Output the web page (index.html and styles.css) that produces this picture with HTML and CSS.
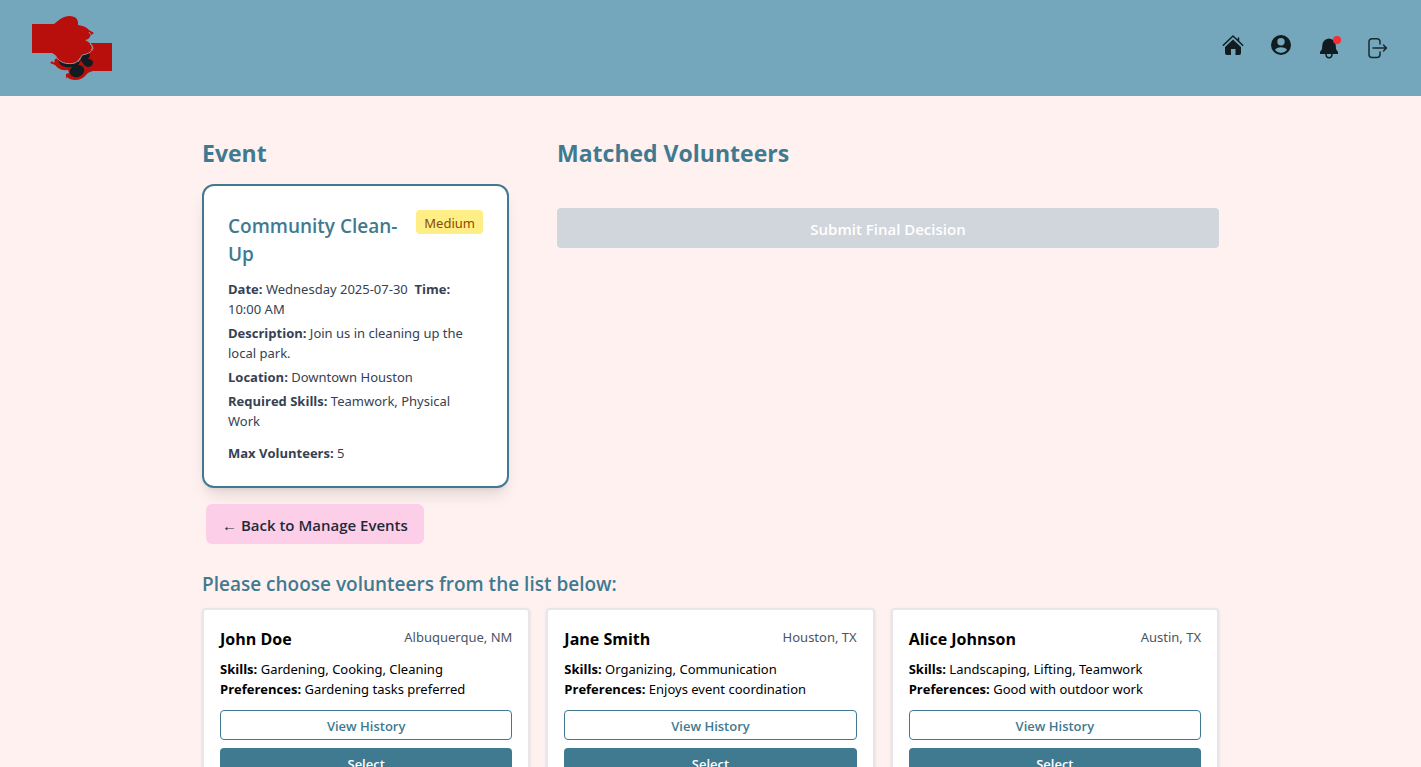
FILE: index.html
```html
<!DOCTYPE html>
<html lang="en">
<head>
<meta charset="utf-8">
<meta name="viewport" content="width=device-width, initial-scale=1">
<title>Volunteer Matching</title>
<link rel="stylesheet" href="styles.css">
</head>
<body>
<header class="navbar">
  <a class="logo" href="#" aria-label="Home page">
    <svg width="80" height="64" viewBox="0 0 80 64">
      <path fill="#b90f0c" d="M55 27H80V55H61Q56 56 54 59Q50 64 43 64Q38 64 35 61L34 63L34 58L37 57L36 54Q30 55 26 52L23 49L18 47L20 45L22 47L23 43L45 36Z"/>
      <path fill="#101c20" d="M26 43Q27 50 34 51Q42 52 47 48L49 43L38 47ZM47 40L57 37Q59 40 56 43Q61 43 61 47Q60 51 56 51Q52 50 51 47Q49 45 47 44Z"/>
      <ellipse cx="45" cy="55" rx="7.5" ry="6" transform="rotate(-20 45 55)" fill="#101c20"/>
      <path fill="#b90f0c" stroke="#9b9294" stroke-width="1" d="M54 24Q61 28 61 33Q58 38 50 39Q49 44 43 47Q34 49 28 45Q25 43 23 39L35 20Z"/>
      <path fill="#b90f0c" d="M0 8H22L27 4Q32 0 38 0Q44 1 45 3L46 6L46 9Q54 10 57 14L62 17L58 20Q58 23 53 24L58 31Q54 38 48 39Q46 46 37 46Q29 46 25 40L20 37H0Z"/>
      <path fill="none" stroke="#9b9294" stroke-width="1" d="M44 1L46 4M57 16L59 19M58 28Q62 31 59 34M48 42L46 46"/>
    </svg>
  </a>
  <nav class="nav-icons" aria-label="Main">
    <a class="nav-link" href="#" aria-label="Home">
      <svg width="24" height="24" viewBox="0 0 24 24"><path fill="#101c20" d="M12 6.500 20 14V20Q20 22 18 22H14.500V16H10V22H6Q4 22 4 20V14Z"/><path fill="none" stroke="#101c20" stroke-width="1.500" stroke-linecap="round" stroke-linejoin="round" d="M2.300 12.300 12 3l9.700 9.300M17.500 5v3"/></svg>
    </a>
    <a class="nav-link" href="#" aria-label="Profile">
      <svg width="24" height="24" viewBox="0 0 24 24"><path fill="#101c20" fill-rule="evenodd" d="M12 2a10 10 0 1 0 0 20a10 10 0 0 0 0-20M12 5a3.700 3.700 0 1 1 0 7.400A3.700 3.700 0 0 1 12 5M12 20Q8.200 19.700 6 17Q7.500 14.500 12 14.300Q16.500 14.500 18 17Q15.800 19.700 12 20"/></svg>
    </a>
    <a class="nav-link low" href="#" aria-label="Notifications">
      <svg width="24" height="24" viewBox="0 0 24 24"><path fill="#101c20" d="M12 2.500Q5.500 3 5.200 10L5 13L3 16V18H21V16L19 13L18.800 10Q18.500 3 12 2.500"/><path fill="none" stroke="#101c20" stroke-width="1.500" d="M9 18Q9 21.700 12 21.700T15 18"/></svg>
      <span class="dot"></span>
    </a>
    <button class="nav-link low" type="button" aria-label="Log out">
      <svg width="24" height="24" viewBox="0 0 24 24" fill="none" stroke="#182a30" stroke-width="1.500" stroke-linecap="round" stroke-linejoin="round"><path d="M15 8V5.500A3 3 0 0 0 12 2.700H7A3 3 0 0 0 4 5.500v13a3 3 0 0 0 3 3h5a3 3 0 0 0 3-3V16M8 12h13.500M18.500 9l3 3-3 3"/></svg>
    </button>
  </nav>
</header>

<main class="page">
  <div class="overview">
    <section>
      <h2 class="section-title">Event</h2>
      <article class="event-card">
        <div class="event-head">
          <h3 class="event-name">Community Clean-Up</h3>
          <span class="badge">Medium</span>
        </div>
        <div class="event-details">
          <p><strong>Date:</strong> Wednesday 2025-07-30 &nbsp;<strong>Time:</strong> 10:00 AM</p>
          <p><strong>Description:</strong> Join us in cleaning up the local park.</p>
          <p><strong>Location:</strong> Downtown Houston</p>
          <p><strong>Required Skills:</strong> Teamwork, Physical Work</p>
          <p class="event-max"><strong>Max Volunteers:</strong> 5</p>
        </div>
      </article>
      <button class="back" type="button">← Back to Manage Events</button>
    </section>
    <section class="matched">
      <h2 class="section-title">Matched Volunteers</h2>
      <button class="submit" type="button" disabled>Submit Final Decision</button>
    </section>
  </div>

  <h3 class="list-title">Please choose volunteers from the list below:</h3>
  <div class="volunteers">
    <article class="volunteer">
      <div class="volunteer-head"><h4 class="volunteer-name">John Doe</h4><span class="place">Albuquerque, NM</span></div>
      <p><strong>Skills:</strong> Gardening, Cooking, Cleaning</p>
      <p><strong>Preferences:</strong> Gardening tasks preferred</p>
      <div class="actions"><button class="btn outline" type="button">View History</button><button class="btn solid" type="button">Select</button></div>
    </article>
    <article class="volunteer">
      <div class="volunteer-head"><h4 class="volunteer-name">Jane Smith</h4><span class="place">Houston, TX</span></div>
      <p><strong>Skills:</strong> Organizing, Communication</p>
      <p><strong>Preferences:</strong> Enjoys event coordination</p>
      <div class="actions"><button class="btn outline" type="button">View History</button><button class="btn solid" type="button">Select</button></div>
    </article>
    <article class="volunteer">
      <div class="volunteer-head"><h4 class="volunteer-name">Alice Johnson</h4><span class="place">Austin, TX</span></div>
      <p><strong>Skills:</strong> Landscaping, Lifting, Teamwork</p>
      <p><strong>Preferences:</strong> Good with outdoor work</p>
      <div class="actions"><button class="btn outline" type="button">View History</button><button class="btn solid" type="button">Select</button></div>
    </article>
  </div>
</main>
</body>
</html>
```
FILE: styles.css
```css
* { box-sizing: border-box; margin: 0; padding: 0; }
body {
  background: #fff1f0;
  color: #000;
  font-family: "Noto Sans", "Open Sans", sans-serif;
  font-size: 13px;
  line-height: 20px;
}
h2, h3, h4, button, strong { font-family: "Open Sans", "Noto Sans", sans-serif; }
button { font-size: 13px; font-weight: 600; cursor: pointer; border: 0; }
svg { display: block; }
strong { font-weight: 700; }

.navbar {
  display: flex;
  align-items: center;
  justify-content: space-between;
  padding: 16px 32px;
  background: #74a7bc;
}
.logo { display: block; }
.nav-icons { display: flex; align-items: flex-start; gap: 24px; }
.nav-link { position: relative; display: block; background: none; padding-bottom: 6px; }
.nav-link.low { padding: 3px 0; }
.dot {
  position: absolute;
  top: 3px;
  right: 0;
  width: 8px;
  height: 8px;
  border-radius: 50%;
  background: #fb2c36;
}

.page { max-width: 1081px; margin: 0 auto; padding: 40px 32px; }
.overview {
  display: grid;
  grid-template-columns: repeat(3, 1fr);
  gap: 48px;
}
.matched { grid-column: span 2; }
.section-title {
  padding-top: 2px;
  margin-bottom: 16px;
  color: #3f7a90;
  font-size: 23px;
  font-weight: 700;
  line-height: 30px;
}
.event-card {
  padding: 24px;
  background: #fff;
  border: 2px solid #3f7a90;
  border-radius: 12px;
  box-shadow: 0 10px 15px -3px rgba(0, 0, 0, .1), 0 4px 6px -4px rgba(0, 0, 0, .1);
}
.event-head { display: flex; justify-content: space-between; align-items: flex-start; margin-bottom: 10px; }
.event-name { padding-top: 2px; color: #3f7a90; font-size: 19px; font-weight: 600; line-height: 28px; }
.badge {
  padding: 3px 8px 1px;
  border-radius: 4px;
  background: #ffee85;
  color: #894b00;
}
.event-details { display: grid; gap: 4px; padding-top: 1px; margin-bottom: -1px; color: #364153; }
.event-max { margin-top: 8px; }
.back, .submit {
  padding: 9px 16px 7px;
  font-size: 15px;
  line-height: 24px;
}
.back {
  margin: 16px 4px 0;
  border-radius: 6px;
  background: #fccee8;
  color: #1e2939;
}
.submit {
  width: 100%;
  margin-top: 24px;
  border-radius: 4px;
  background: #d1d5dc;
  color: #fff;
}

.list-title {
  margin: 26px 0 10px;
  color: #3f7a90;
  font-size: 19px;
  font-weight: 600;
  line-height: 28px;
}
.volunteers { display: grid; grid-template-columns: repeat(3, 1fr); gap: 16px; }
.volunteer {
  padding: 17px 16px 16px;
  background: #fff;
  border: 2px solid #e5e7eb;
  border-radius: 4px;
  box-shadow: 0 1px 3px rgba(0, 0, 0, .1), 0 1px 2px -1px rgba(0, 0, 0, .1);
}
.volunteer-head { display: flex; justify-content: space-between; margin-bottom: 8px; }
.volunteer-name { font-size: 16px; font-weight: 700; line-height: 24px; }
.place { color: #4a5565; }
.actions { display: grid; gap: 8px; margin-top: 11px; }
.btn { min-height: 30px; padding: 1px 12px 0; border-radius: 4px; }
.outline { background: #fff; border: 1px solid #3f7a90; color: #3f7a90; }
.solid { background: #3f7a90; color: #fff; }
```
